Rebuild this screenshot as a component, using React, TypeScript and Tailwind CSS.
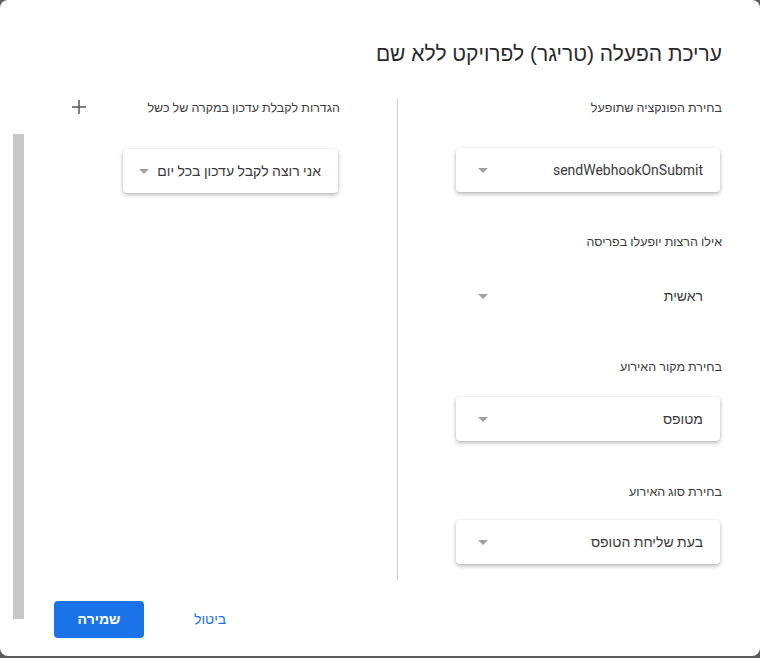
import React from "react";

const font = { fontFamily: 'Roboto, "Liberation Sans", Arial, sans-serif' };

function Arrow() {
    return (
        <svg width="10" height="5" viewBox="0 0 10 5" className="shrink-0">
            <path d="M0 0 L10 0 L5 5 Z" fill="#a0a0a0" />
        </svg>
    );
}

function Select({ value, flat = false, className = "" }: { value: string; flat?: boolean; className?: string }) {
    return (
        <div
            className={`h-[44px] flex items-center justify-between gap-[8px] pr-[17px] pl-[22px] rounded-[4px] ${
                flat ? "" : "bg-white shadow-[0_2px_4px_rgba(0,0,0,0.28),0_0_2px_rgba(0,0,0,0.08)]"
            } ${className}`}
        >
            <span className="text-[14px] text-[#3a3a3a] whitespace-nowrap">{value}</span>
            <Arrow />
        </div>
    );
}

function Label({ children, className = "" }: { children: React.ReactNode; className?: string }) {
    return <div className={`h-[20px] leading-[20px] text-[12.5px] text-[#3c3c3c] ${className}`}>{children}</div>;
}

export default function App() {
    return (
        <div className="w-[760px] h-[658px] bg-[#5a5a5a]" style={font}>
            <div dir="rtl" className="w-[760px] h-[656px] bg-white rounded-[8px] flex">
                {/* Main */}
                <div className="flex-1 min-w-0 flex flex-col pr-[38px]">
                    <h1
                        className="pt-[40px] h-[98px] text-[21px] leading-[28px] text-[#2a2a2a] font-normal"
                        style={{ fontFamily: '"Liberation Sans", Arial, sans-serif' }}
                    >
                        עריכת הפעלה (טריגר) לפרויקט ללא שם
                    </h1>

                    <div className="flex h-[482px]">
                        {/* Right column */}
                        <div className="w-[324px] shrink-0 flex flex-col pl-[2px]">
                            <Label>בחירת הפונקציה שתופעל</Label>
                            <Select value="sendWebhookOnSubmit" className="mt-[30px] w-[264px] mr-[2px]" />

                            <Label className="mt-[40px]">אילו הרצות יופעלו בפריסה</Label>
                            <Select value="ראשית" flat className="mt-[22px] w-[264px] mr-[2px]" />

                            <Label className="mt-[39px]">בחירת מקור האירוע</Label>
                            <Select value="מטופס" className="mt-[20px] w-[264px] mr-[2px]" />

                            <Label className="mt-[41px]">בחירת סוג האירוע</Label>
                            <Select value="בעת שליחת הטופס" className="mt-[18px] w-[264px] mr-[2px]" />
                        </div>

                        {/* Divider */}
                        <div className="w-px bg-[#cfcfcf] mt-px" />

                        {/* Left column */}
                        <div className="flex-1 min-w-0 pr-[57px] pl-[48px]">
                            <div className="flex items-center justify-between">
                                <Label>הגדרות לקבלת עדכון במקרה של כשל</Label>
                                <svg width="14" height="14" viewBox="0 0 14 14" className="-mt-[2px]">
                                    <path d="M7 0 V14 M0 7 H14" stroke="#555" strokeWidth="1.5" />
                                </svg>
                            </div>
                            <Select value="אני רוצה לקבל עדכון בכל יום" className="mt-[31px] w-[215px] mr-[2px]" />
                        </div>
                    </div>

                    {/* Footer */}
                    <div className="mt-[21px] flex items-center justify-end pl-[30px] gap-[34px]">
                        <button className="h-[37px] px-[16px] text-[14px] font-medium text-[#1a73e8]" style={font}>
                            ביטול
                        </button>
                        <button
                            className="h-[37px] w-[90px] rounded-[4px] bg-[#1a73e8] text-white text-[14px] font-bold"
                            style={font}
                        >
                            שמירה
                        </button>
                    </div>
                </div>

                {/* Scrollbar */}
                <div className="w-[24px] shrink-0 pl-[12px]">
                    <div className="mt-[134px] w-[11px] h-[485px] bg-[#c8c8c8]" />
                </div>
            </div>
        </div>
    );
}
